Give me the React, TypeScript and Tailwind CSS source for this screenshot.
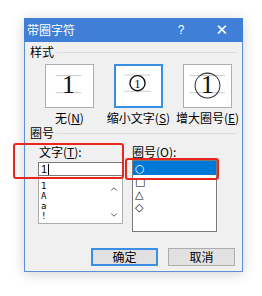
import { ChevronDown, ChevronUp } from "lucide-react";

const font = { fontFamily: '"Noto Sans CJK SC", "Noto Sans", sans-serif' };

const Ul = ({ c }: { c: string }) => <span className="underline underline-offset-1">{c}</span>;

const StyleBox = ({ kind, active }: { kind: "none" | "small" | "big"; active?: boolean }) => (
  <div
    className={
      "h-[44px] w-[49px] bg-white " +
      (active ? "border-2 border-[#3a8ee6]" : "border border-[#adadad]")
    }
  >
    <svg viewBox="0 0 49 44" className="h-full w-full" style={{ margin: active ? -1 : 0 }}>
      {kind === "big" ? (
        <>
          <line x1="6" y1="11" x2="43" y2="11" stroke="#c9c9c9" />
          <line x1="6" y1="29" x2="43" y2="29" stroke="#c9c9c9" />
          <circle cx="24.5" cy="21.5" r="13" fill="none" stroke="#333" strokeWidth="1.1" />
          <text x="24.5" y="29" textAnchor="middle" fontSize="27" fontFamily='"Liberation Serif", serif' fill="#111">1</text>
        </>
      ) : kind === "small" ? (
        <>
          <line x1="10" y1="11" x2="39" y2="11" stroke="#c9c9c9" />
          <line x1="10" y1="29" x2="39" y2="29" stroke="#c9c9c9" />
          <circle cx="24.5" cy="20" r="8.3" fill="none" stroke="#111" strokeWidth="1.5" />
          <text x="24.5" y="24.8" textAnchor="middle" fontSize="14" fontFamily='"Liberation Serif", serif' fill="#111">1</text>
        </>
      ) : (
        <>
          <line x1="10" y1="11" x2="37" y2="11" stroke="#c9c9c9" />
          <line x1="10" y1="29" x2="37" y2="29" stroke="#c9c9c9" />
          <text x="23.5" y="29" textAnchor="middle" fontSize="27" fontFamily='"Liberation Serif", serif' fill="#111">1</text>
        </>
      )}
    </svg>
  </div>
);

export default function App() {
  return (
    <div className="h-[296px] w-[262px] bg-white pl-[24px] pt-[18px]" style={font}>
      <div className="relative flex h-[254px] w-[219px] flex-col border border-[#5b8fd8] bg-[#f0f0f0] text-[12px] leading-[14px] text-black shadow-[0_2px_12px_rgba(0,0,0,0.18)]">
        {/* title bar */}
        <div className="-mx-px -mt-px flex h-[24px] items-center bg-[#3f7fd8] pl-[3px] pr-[15px] text-white">
          <span className="flex-1">带圈字符</span>
          <span className="mr-[31px]" style={{ fontFamily: '"Liberation Sans", sans-serif' }}>?</span>
          <span className="text-[15px]" style={{ fontFamily: '"DejaVu Sans", sans-serif' }}>✕</span>
        </div>

        {/* 样式 */}
        <div className="mt-[3px] flex items-center pl-[5px] pr-[5px]">
          <span>样式</span>
          <div className="ml-[3px] h-px flex-1 bg-[#dcdcdc]" />
        </div>

        <div className="mt-[5px] flex gap-[20px] pl-[20px]">
          <StyleBox kind="none" />
          <StyleBox kind="small" active />
          <StyleBox kind="big" />
        </div>
        <div className="mt-[3px] flex gap-[20px] pl-[20px]">
          <div className="flex w-[49px] justify-center whitespace-nowrap">
            无(<Ul c="N" />)
          </div>
          <div className="flex w-[49px] justify-center whitespace-nowrap">
            缩小文字(<Ul c="S" />)
          </div>
          <div className="flex w-[49px] justify-center whitespace-nowrap">
            增大圈号(<Ul c="E" />)
          </div>
        </div>

        {/* 圈号 */}
        <div className="mt-[1px] flex items-center pl-[5px] pr-[5px]">
          <span>圈号</span>
          <div className="ml-[3px] h-px flex-1 bg-[#dcdcdc]" />
        </div>

        <div className="mt-[5px] flex gap-[9px] pl-[13px]">
          <div className="flex w-[85px] flex-col">
            <div className="pl-[1px]">
              文字(<Ul c="T" />):
            </div>
            <div className="mt-[3px] flex h-[14px] items-center border border-[#7a7a7a] bg-white pl-[2px] text-[11px]" style={{ fontFamily: '"Liberation Sans", sans-serif' }}>
              1<span className="ml-px h-[11px] w-px bg-black" />
            </div>
            <div className="flex h-[48px] border border-t-0 border-[#adadad] bg-white">
              <div className="flex flex-1 flex-col pl-[2px] pt-[5px] text-[9px] leading-[10px]" style={{ fontFamily: '"DejaVu Sans Mono", monospace' }}>
                <span>1</span>
                <span>A</span>
                <span>a</span>
                <span>!</span>
              </div>
              <div className="flex w-[16px] flex-col items-center justify-between pb-[3px] pt-[8px] text-[#505050]">
                <ChevronUp size={10} strokeWidth={2.2} />
                <ChevronDown size={10} strokeWidth={2.2} />
              </div>
            </div>
          </div>

          <div className="flex w-[85px] flex-col">
            <div>
              圈号(<Ul c="O" />):
            </div>
            <div className="mt-px flex h-[72px] flex-col border border-[#7a7a7a] bg-white text-[11px] leading-[13px]" style={{ fontFamily: '"DejaVu Sans", sans-serif' }}>
              <div className="flex h-[14px] items-center bg-[#0078d7] pl-[2px] text-white">○</div>
              <div className="pl-[2px]">□</div>
              <div className="pl-[2px]">△</div>
              <div className="pl-[2px]">◇</div>
            </div>
          </div>
        </div>

        {/* buttons */}
        <div className="mt-auto mb-[5px] flex justify-end gap-[10px] pr-[7px]">
          <button className="flex h-[18px] w-[67px] items-center justify-center border-2 border-[#3a8ee6] bg-[#e1e1e1]">
            确定
          </button>
          <button className="flex h-[18px] w-[67px] items-center justify-center border border-[#adadad] bg-[#e1e1e1]">
            取消
          </button>
        </div>

        {/* annotation boxes */}
        <div className="absolute left-[-12px] top-[124px] h-[36px] w-[111px] rounded-[3px] border-2 border-[#e8261e]" />
        <div className="absolute left-[100px] top-[139px] h-[22px] w-[94px] rounded-[3px] border-2 border-[#e8261e]" />
      </div>
    </div>
  );
}
